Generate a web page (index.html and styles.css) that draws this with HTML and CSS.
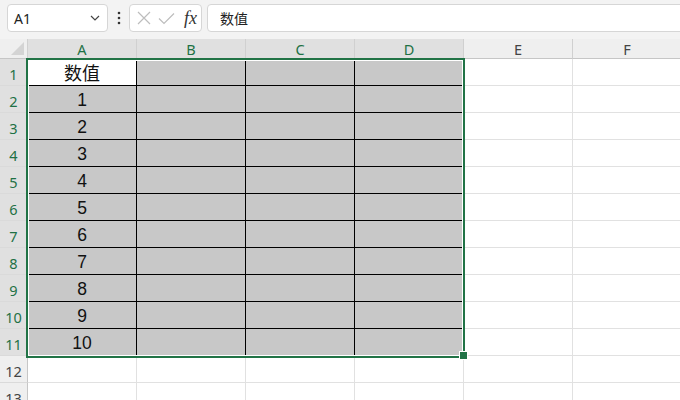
FILE: index.html
```html
<!DOCTYPE html>
<html lang="zh">

<head>
    <meta charset="UTF-8">
    <meta name="viewport" content="width=device-width, initial-scale=1.0">
    <title>Sheet1</title>
    <link rel="stylesheet" href="styles.css">
</head>

<body>
    <div class="toolbar">
        <div class="namebox">
            <span>A1</span>
            <svg class="chev" width="10" height="6" viewBox="0 0 10 6"><path d="M1 1L5 5L9 1" fill="none" stroke="#444" stroke-width="1.2"/></svg>
        </div>
        <div class="dots">
            <svg width="4" height="14" viewBox="0 0 4 14"><circle cx="2" cy="2" r="1.3" fill="#333"/><circle cx="2" cy="7" r="1.3" fill="#333"/><circle cx="2" cy="12" r="1.3" fill="#333"/></svg>
        </div>
        <div class="buttons">
            <svg width="14" height="14" viewBox="0 0 14 14"><path d="M1 1L13 13M13 1L1 13" fill="none" stroke="#bdbdbd" stroke-width="1.2"/></svg>
            <svg width="17" height="13" viewBox="0 0 17 13"><path d="M1 6.5L6 11.5L16 1.5" fill="none" stroke="#bdbdbd" stroke-width="1.2"/></svg>
            <span class="fx">fx</span>
        </div>
        <div class="formula">数值</div>
    </div>

    <div class="sheet">
        <div class="corner"></div><div class="hd on">A</div><div class="hd on">B</div><div class="hd on">C</div><div class="hd on">D</div><div class="hd">E</div><div class="hd">F</div>

        <div class="rh on">1</div><div class="c w a cjk">数值</div><div class="c g"></div><div class="c g"></div><div class="c g"></div><div class="c"></div><div class="c"></div>
        <div class="rh on">2</div><div class="c g a">1</div><div class="c g"></div><div class="c g"></div><div class="c g"></div><div class="c"></div><div class="c"></div>
        <div class="rh on">3</div><div class="c g a">2</div><div class="c g"></div><div class="c g"></div><div class="c g"></div><div class="c"></div><div class="c"></div>
        <div class="rh on">4</div><div class="c g a">3</div><div class="c g"></div><div class="c g"></div><div class="c g"></div><div class="c"></div><div class="c"></div>
        <div class="rh on">5</div><div class="c g a">4</div><div class="c g"></div><div class="c g"></div><div class="c g"></div><div class="c"></div><div class="c"></div>
        <div class="rh on">6</div><div class="c g a">5</div><div class="c g"></div><div class="c g"></div><div class="c g"></div><div class="c"></div><div class="c"></div>
        <div class="rh on">7</div><div class="c g a">6</div><div class="c g"></div><div class="c g"></div><div class="c g"></div><div class="c"></div><div class="c"></div>
        <div class="rh on">8</div><div class="c g a">7</div><div class="c g"></div><div class="c g"></div><div class="c g"></div><div class="c"></div><div class="c"></div>
        <div class="rh on">9</div><div class="c g a">8</div><div class="c g"></div><div class="c g"></div><div class="c g"></div><div class="c"></div><div class="c"></div>
        <div class="rh on">10</div><div class="c g a">9</div><div class="c g"></div><div class="c g"></div><div class="c g"></div><div class="c"></div><div class="c"></div>
        <div class="rh on">11</div><div class="c g a">10</div><div class="c g"></div><div class="c g"></div><div class="c g"></div><div class="c"></div><div class="c"></div>
        <div class="rh">12</div><div class="c"></div><div class="c"></div><div class="c"></div><div class="c"></div><div class="c"></div><div class="c"></div>
        <div class="rh">13</div><div class="c"></div><div class="c"></div><div class="c"></div><div class="c"></div><div class="c"></div><div class="c"></div>

        <!-- selection A1:D11 -->
        <div class="selection"></div>
        <div class="handle"></div>
    </div>
</body>

</html>
```

FILE: styles.css
```css
body {
    margin: 0;
    background-color: #f3f3f3;
    font-family: "Noto Sans", "Noto Sans CJK SC", sans-serif;
    color: #222;
    overflow: hidden;
}

.toolbar {
    display: flex;
    height: 39px;
    box-sizing: border-box;
    padding: 4px 0 0 7px;
}

.namebox {
    display: flex;
    align-items: center;
    justify-content: space-between;
    width: 101px;
    height: 28px;
    box-sizing: border-box;
    padding: 0 6px 0 6px;
    background-color: #fff;
    border: 1px solid #d6d6d6;
    border-radius: 4px;
    font-size: 14px;
}

.chev {
    margin-right: 1px;
}

.dots {
    width: 21px;
    height: 28px;
    display: flex;
    align-items: center;
    justify-content: center;
}

.buttons {
    display: flex;
    align-items: center;
    width: 73px;
    height: 28px;
    box-sizing: border-box;
    padding-left: 7px;
    gap: 7px;
    background-color: #fff;
    border: 1px solid #d6d6d6;
    border-radius: 4px;
}

.fx {
    font-family: "Liberation Serif", serif;
    font-style: italic;
    font-size: 18px;
    color: #333;
    margin-left: 2px;
    line-height: 1;
}

.formula {
    flex: 1;
    margin-left: 5px;
    margin-right: -10px;
    height: 28px;
    box-sizing: border-box;
    padding-left: 12px;
    line-height: 26px;
    background-color: #fff;
    border: 1px solid #d6d6d6;
    border-radius: 4px;
    font-family: "Noto Sans CJK SC", sans-serif;
    font-size: 14px;
}

.sheet {
    position: relative;
    display: grid;
    grid-template-columns: 28px repeat(6, 109px);
    grid-template-rows: 20px;
    grid-auto-rows: 27px;
    background-color: #fff;
}

.corner {
    position: relative;
    background-color: #efefef;
    border-right: 1px solid #d0d0d0;
    border-bottom: 1px solid #c6c6c6;
}

.corner::after {
    content: "";
    position: absolute;
    right: 3px;
    bottom: 3px;
    border-left: 13px solid transparent;
    border-bottom: 13px solid #d4d4d4;
}

.hd {
    display: flex;
    align-items: center;
    justify-content: center;
    background-color: #efefef;
    border-right: 1px solid #d0d0d0;
    border-bottom: 1px solid #c6c6c6;
    font-size: 14.5px;
    color: #444;
}

.hd.on {
    background-color: #e0e0e0;
    color: #1e7145;
}

.rh {
    display: flex;
    align-items: center;
    justify-content: center;
    background-color: #efefef;
    border-right: 1px solid #c6c6c6;
    border-bottom: 1px solid #dadada;
    font-size: 14.5px;
    color: #444;
    padding-top: 3px;
    box-sizing: border-box;
}

.rh.on {
    background-color: #e0e0e0;
    color: #1e7145;
}

.c {
    border-right: 1px solid #e1e1e1;
    border-bottom: 1px solid #e1e1e1;
}

.c.g {
    background-color: #c8c8c8;
    border-color: #000;
}

.c.w {
    border-color: #000;
}

.c.a {
    display: flex;
    align-items: center;
    justify-content: center;
    padding-top: 3px;
    box-sizing: border-box;
    font-family: "Liberation Sans", sans-serif;
    font-size: 17.5px;
    color: #111;
}

.c.cjk {
    font-family: "Noto Sans CJK SC", sans-serif;
    font-size: 18px;
    padding-top: 0;
}

.selection {
    position: absolute;
    left: 26px;
    top: 19px;
    width: 439px;
    height: 300px;
    box-sizing: border-box;
    border: 2px solid #217346;
    box-shadow: inset 0 0 0 1px #fff;
}

.handle {
    position: absolute;
    left: 460px;
    top: 313px;
    width: 7px;
    height: 7px;
    box-sizing: border-box;
    background-color: #217346;
    outline: 1px solid #fff;
}
```
